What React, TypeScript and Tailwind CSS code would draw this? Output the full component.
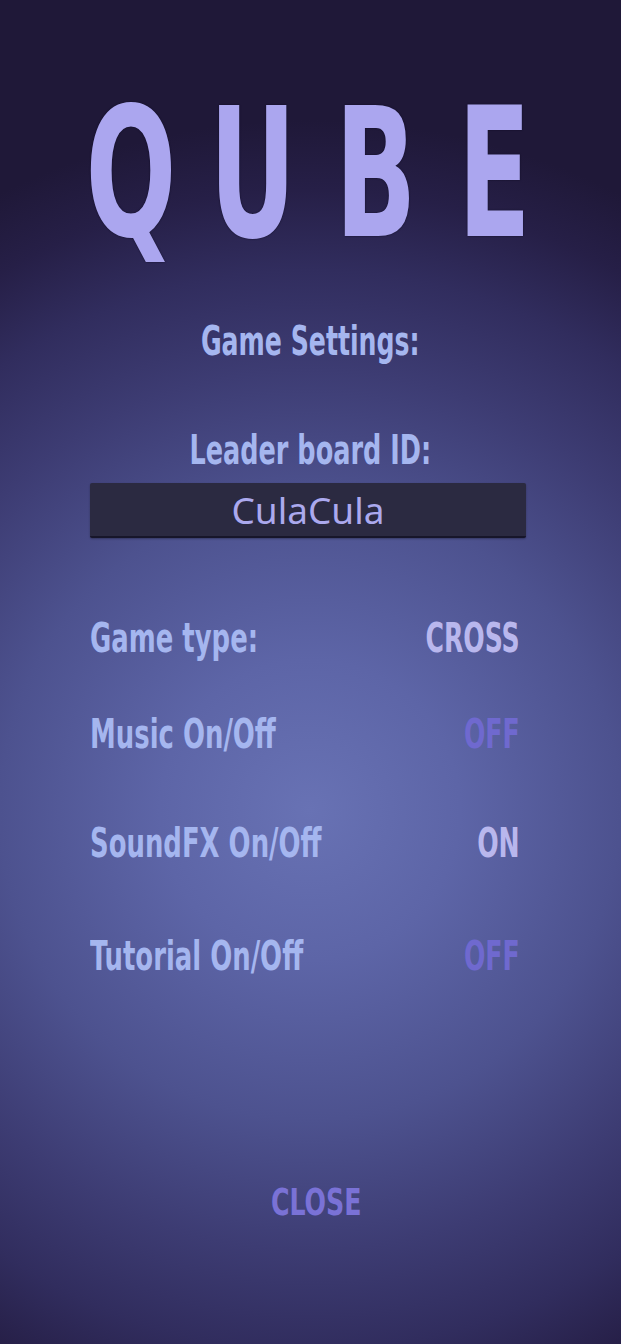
import React from "react";

const F = { fontFamily: "'DejaVu Sans Condensed', 'DejaVu Sans', sans-serif" };

function Letter({ ch, w }: { ch: string; w: string }) {
  return (
    <div className={`${w} flex justify-center overflow-visible`}>
      <span className="inline-block origin-center scale-x-[0.66] [text-shadow:0_0_2px_#0b0820]">{ch}</span>
    </div>
  );
}

function Row({ label, value, valueClass, mt }: { label: string; value: string; valueClass: string; mt: string }) {
  return (
    <div className={`${mt} flex justify-between items-start h-[40px] leading-none`}>
      <span className="inline-block origin-left scale-x-[0.72] text-[#a5b6ef] whitespace-nowrap">{label}</span>
      <span className={`inline-block origin-right scale-x-[0.7] whitespace-nowrap ${valueClass}`}>{value}</span>
    </div>
  );
}

export default function App() {
  return (
    <div
      className="w-[621px] h-[1344px] overflow-hidden bg-[radial-gradient(circle_at_310px_810px,#6872b4_0px,#5d65a7_150px,#4d528f_310px,#3d3c73_440px,#312d5e_540px,#261f47_620px,#1f1838_690px)] font-bold"
      style={F}
    >
      <div className="pt-[84px] flex flex-col">
        <div className="flex justify-center gap-[50px] h-[180px] text-[180px] leading-none text-[#aba6ef]">
          <Letter ch="Q" w="w-[73px]" />
          <Letter ch="U" w="w-[72px]" />
          <Letter ch="B" w="w-[73px]" />
          <Letter ch="E" w="w-[65px]" />
        </div>
        <div className="mt-[57px] h-[40px] text-[40px] leading-none text-center text-[#a5b6ef]">
          <span className="inline-block origin-center scale-x-[0.7]">Game Settings:</span>
        </div>
        <div className="mt-[69px] h-[40px] text-[40px] leading-none text-center text-[#a5b6ef]">
          <span className="inline-block origin-center scale-x-[0.71]">Leader board ID:</span>
        </div>
        <div className="mt-[13px] mx-[90px] w-[436px] h-[55px] bg-[#2b2a41] border-b-2 border-[#17162a] rounded-[2px] flex items-center justify-center shadow-[0_1px_2px_rgba(0,0,0,0.3)]">
          <span className="text-[37px] font-normal text-[#aba9ee] leading-none" style={{ fontFamily: "'Noto Sans', 'Open Sans', sans-serif" }}>
            CulaCula
          </span>
        </div>
        <div className="mx-[90px] w-[430px] text-[40px]">
          <Row mt="mt-[80px]" label="Game type:" value="CROSS" valueClass="text-[#b9b7ed]" />
          <Row mt="mt-[56px]" label="Music On/Off" value="OFF" valueClass="text-[#6f69cf]" />
          <Row mt="mt-[69px]" label="SoundFX On/Off" value="ON" valueClass="text-[#b9b7ed]" />
          <Row mt="mt-[73px]" label="Tutorial On/Off" value="OFF" valueClass="text-[#6f69cf]" />
        </div>
        <div className="mt-[207px] h-[38px] pl-[12px] text-[38px] leading-none text-center text-[#7a72d6]">
          <span className="inline-block origin-center scale-x-[0.74]">CLOSE</span>
        </div>
      </div>
    </div>
  );
}
